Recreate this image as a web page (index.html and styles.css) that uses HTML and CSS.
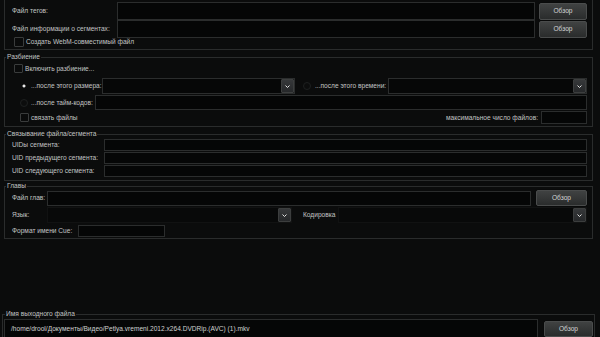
FILE: index.html
```html
<!DOCTYPE html>
<html>
<head>
<meta charset="utf-8">
<link rel="stylesheet" href="styles.css">
</head>
<body>
<div class="topbox">
  <div class="filegrid">
    <span class="lbl">Файл тегов:</span>
    <div class="input"></div>
    <button class="btn">Обзор</button>
    <span class="lbl">Файл информации о сегментах:</span>
    <div class="input"></div>
    <button class="btn">Обзор</button>
  </div>
  <div class="row webm"><span class="check"></span><span class="lbl">Создать WebM-совместимый файл</span></div>
</div>

<fieldset class="group split">
  <legend>Разбиение</legend>
  <div class="row r-enable"><span class="check"></span><span class="lbl">Включить разбиение...</span></div>
  <div class="row r-size">
    <span class="radio on"></span><span class="lbl w-size">...после этого размера:</span>
    <div class="combo c-size"><span class="arrow"><svg width="5" height="3" viewBox="0 0 5 3"><path d="M0.5 0.5 L2.5 2.5 L4.5 0.5" stroke="#e0e0e0" fill="none" stroke-width="1"/></svg></span></div>
    <span class="radio r2"></span><span class="lbl w-time">...после этого времени:</span>
    <div class="combo grow"><span class="arrow"><svg width="5" height="3" viewBox="0 0 5 3"><path d="M0.5 0.5 L2.5 2.5 L4.5 0.5" stroke="#e0e0e0" fill="none" stroke-width="1"/></svg></span></div>
  </div>
  <div class="row r-tc">
    <span class="radio"></span><span class="lbl w-tc">...после тайм-кодов:</span>
    <div class="input grow"></div>
  </div>
  <div class="row r-link">
    <span class="check small"></span><span class="lbl link-lbl">связать файлы</span>
    <span class="grow"></span>
    <span class="lbl">максимальное число файлов:</span>
    <div class="input maxfiles"></div>
  </div>
</fieldset>

<fieldset class="group uids">
  <legend>Связывание файла/сегмента</legend>
  <div class="uidgrid">
    <span class="lbl">UIDы сегмента:</span><div class="input"></div>
    <span class="lbl">UID предыдущего сегмента:</span><div class="input"></div>
    <span class="lbl">UID следующего сегмента:</span><div class="input"></div>
  </div>
</fieldset>

<fieldset class="group chapters">
  <legend>Главы</legend>
  <div class="row ch-file">
    <span class="lbl w-ch">Файл глав:</span>
    <div class="input grow"></div>
    <button class="btn ch-btn">Обзор</button>
  </div>
  <div class="row ch-lang">
    <span class="lbl w-ch">Язык:</span>
    <div class="combo flat c-lang"><span class="arrow"><svg width="5" height="3" viewBox="0 0 5 3"><path d="M0.5 0.5 L2.5 2.5 L4.5 0.5" stroke="#e0e0e0" fill="none" stroke-width="1"/></svg></span></div>
    <span class="lbl w-enc">Кодировка</span>
    <div class="combo flat grow"><span class="arrow"><svg width="5" height="3" viewBox="0 0 5 3"><path d="M0.5 0.5 L2.5 2.5 L4.5 0.5" stroke="#e0e0e0" fill="none" stroke-width="1"/></svg></span></div>
  </div>
  <div class="row ch-cue">
    <span class="lbl w-cue">Формат имени Cue:</span>
    <div class="input cue"></div>
  </div>
</fieldset>

<fieldset class="group output">
  <legend>Имя выходного файла</legend>
  <div class="row out-row">
    <div class="input grow out-input">/home/drool/Документы/Видео/Petlya.vremeni.2012.x264.DVDRip.(AVC) (1).mkv</div>
    <button class="btn out-btn">Обзор</button>
  </div>
</fieldset>
</body>
</html>
```

FILE: styles.css
```css
* { box-sizing: border-box; }
html, body {
  margin: 0;
  padding: 0;
  width: 600px;
  height: 337px;
  overflow: hidden;
  background: #0b0c0c;
}
body {
  font-family: "Liberation Sans", "DejaVu Sans", sans-serif;
  font-size: 6.6px;
  line-height: 8px;
  color: #c2c4c4;
}
.lbl { white-space: nowrap; }

.input {
  background: #050606;
  border: 1px solid #2b2d2d;
  min-width: 0;
}
.grow { flex: 1 1 auto; min-width: 0; }

.btn {
  font-family: inherit;
  font-size: 6.6px;
  line-height: 8px;
  color: #d4d6d6;
  padding: 0;
  background: linear-gradient(#404242, #2a2c2c);
  border: 1px solid #4a4c4c;
  border-radius: 2px;
  box-shadow: 0 0 1px #000;
}

.check {
  display: inline-block;
  width: 10px;
  height: 10px;
  background: #0a0b0b;
  border: 1px solid #3a3c3c;
  border-radius: 1px;
  flex: none;
}
.check.small { width: 9px; height: 9px; }

.radio {
  display: inline-block;
  width: 8px;
  height: 8px;
  border-radius: 50%;
  border: 1px solid #1e2020;
  background: #0c0d0d;
  flex: none;
}
.radio.on {
  border-color: transparent;
  background: radial-gradient(circle, #e8e8e8 0 1.2px, #0b0c0c 1.8px);
}

.combo {
  display: flex;
  justify-content: flex-end;
  background: #060707;
  border: 1px solid #2b2d2d;
  height: 100%;
}
.combo.flat { border-color: #111212; background: #080909; }
.arrow {
  width: 13px;
  height: 100%;
  display: flex;
  align-items: center;
  justify-content: center;
  background: linear-gradient(#36383a, #26282a);
  border: 1px solid #3c3e3e;
  border-radius: 1px;
}

.row { display: flex; align-items: center; }

/* top box */
.topbox {
  margin: 0 7px 0 4px;
  height: 50px;
  border: 1px solid #2a2c2c;
  border-top: none;
  padding: 2px 5px 0 7px;
}
.filegrid {
  display: grid;
  grid-template-columns: 101px 1fr 48px;
  grid-auto-rows: 18px;
  column-gap: 4px;
  align-items: center;
}
.filegrid .input { height: 18px; }
.filegrid .btn { height: 17px; }
.webm { margin-top: -1px; padding-left: 2px; height: 10px; }
.webm .lbl { margin-left: 2px; }

/* groups */
.group {
  margin: 3px 7px 0 4px;
  border: 1px solid #2a2c2c;
  padding: 0 5px 2px 0;
  min-width: 0;
}
.group legend {
  padding: 0 1px;
  margin-left: 1px;
  line-height: 8px;
  color: #c2c4c4;
}

/* split */
.r-enable { margin-top: 3px; padding-left: 9px; height: 9px; }
.r-enable .check { width: 9px; height: 9px; }
.r-enable .lbl { margin-left: 2px; }
.r-size { margin-top: 5px; height: 16px; padding-left: 15px; }
.w-size { margin-left: 3px; width: 71px; }
.c-size { width: 193px; flex: none; }
.r2 { margin-left: 8px; }
.w-time { margin-left: 4px; width: 73px; }
.r-tc { margin-top: 1px; height: 15px; padding-left: 15px; }
.r-tc .input { height: 15px; }
.w-tc { margin-left: 3px; width: 64px; }
.r-link { margin-top: 1px; height: 13px; padding-left: 15px; }
.link-lbl { margin-left: 2px; }
.maxfiles { width: 46px; height: 13px; margin-left: 3px; flex: none; }

/* uids */
.uids { margin-top: 3px; }
.uidgrid {
  display: grid;
  grid-template-columns: 92px 1fr;
  grid-auto-rows: 12px;
  row-gap: 1px;
  padding: 1px 0 1px 7px;
  align-items: center;
}
.uidgrid .input { height: 12px; }

/* chapters */
.chapters { margin-top: 1px; padding-bottom: 1px; }
.chapters .row { padding-left: 7px; }
.ch-file { height: 16px; }
.ch-file .input { height: 15px; }
.w-ch { width: 35px; }
.ch-btn { width: 51px; height: 16px; margin-left: 5px; flex: none; }
.ch-lang { margin-top: 1px; height: 16px; }
.c-lang { width: 245px; flex: none; }
.w-enc { margin-left: 11px; width: 35px; }
.ch-cue { margin-top: 2px; height: 12px; }
.w-cue { width: 66px; }
.cue { width: 87px; height: 12px; }

/* output */
.output {
  margin: 71px 5px 0 2px;
  padding: 0 1px 0 1px;
}
.out-row { margin-top: 1px; align-items: flex-start; }
.out-input {
  height: 19px;
  padding-left: 6px;
  display: flex;
  align-items: center;
  color: #cfd1d1;
  white-space: nowrap;
  overflow: hidden;
}
.out-btn { width: 49px; height: 16px; margin-left: 6px; margin-top: 2px; flex: none; }
```
